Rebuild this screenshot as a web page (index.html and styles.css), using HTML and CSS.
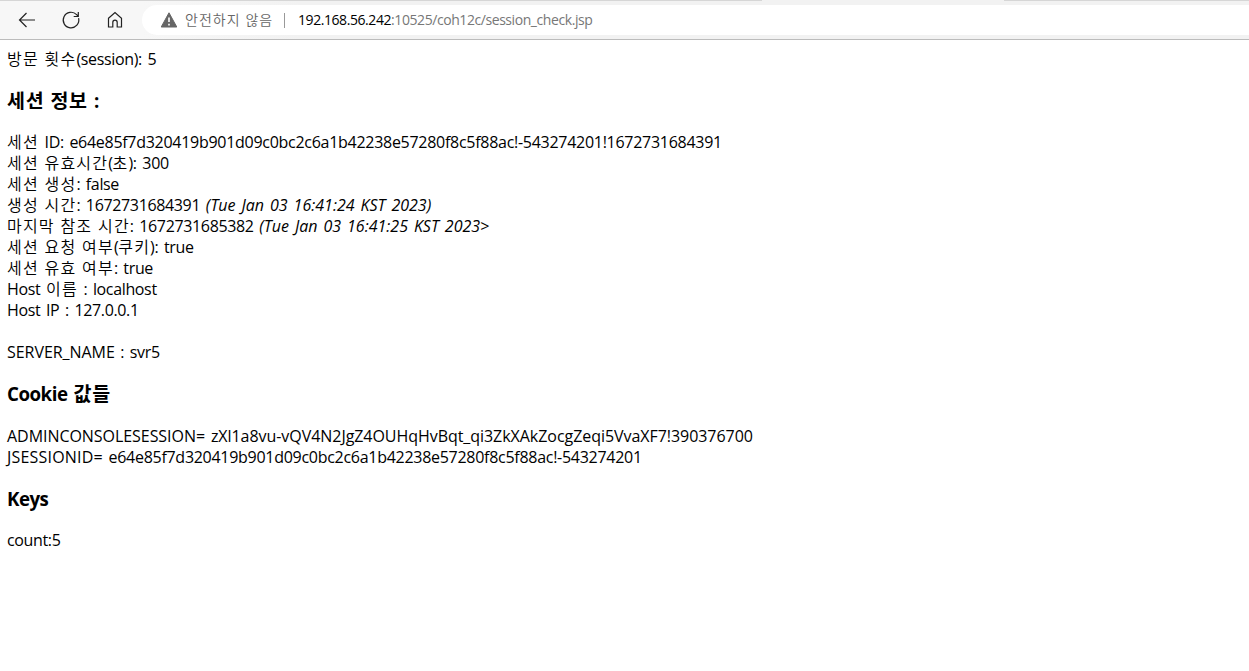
FILE: index.html
```html
<!DOCTYPE html>
<html lang="ko">

<head>
    <meta charset="UTF-8">
    <meta name="viewport" content="width=device-width, initial-scale=1.0">
    <title>session_check.jsp</title>
    <link rel="stylesheet" href="styles.css">
</head>

<body>
    <!-- 주소 표시줄 -->
    <div class="toolbar">
        <div class="tab-edge">
            <span class="edge-left"></span>
            <span class="edge-right"></span>
        </div>
        <div class="nav">
            <svg class="icon" width="20" height="20" viewBox="0 0 20 20">
                <path d="M18 10H2.5M9.5 3L2.5 10l7 7" />
            </svg>
            <svg class="icon" width="20" height="20" viewBox="0 0 20 20">
                <path d="M17.6 8.2A7.8 7.8 0 1 1 15.6 4.6L17.3 6.3M17.3 2v4.5h-4.6" />
            </svg>
            <svg class="icon" width="20" height="20" viewBox="0 0 20 20">
                <path d="M3.5 8.3L10 2.5l6.5 5.8V17h-4.3v-4.6a2.2 2.2 0 0 0-4.4 0V17H3.5z" />
            </svg>
        </div>
        <div class="address">
            <svg class="warn" width="16" height="16" viewBox="0 0 16 16">
                <path d="M8 .8L15.8 15H.2z" fill="#666" stroke="#666" stroke-linejoin="round" />
                <path d="M8 5.5v4.6M8 11.8v1.7" stroke="#fff" stroke-width="1.6" />
            </svg>
            <span class="secure">안전하지 않음</span>
            <span class="divider"></span>
            <span class="url"><b>192.168.56.242</b>:10525/coh12c/session_check.jsp</span>
        </div>
    </div>

    <!-- 세션 내용 -->
    <div class="page">
        <div><span class="ko">방문 횟수</span>(session): 5</div>
        <h3><span class="ko">세션 정보</span> :</h3>
        <div><span class="ko">세션 </span>ID: <span class="hash">e64e85f7d320419b901d09c0bc2c6a1b42238e57280f8c5f88ac!-543274201!1672731684391</span></div>
        <div><span class="ko">세션 유효시간</span>(<span class="ko">초</span>): 300</div>
        <div><span class="ko">세션 생성</span>: false</div>
        <div><span class="ko">생성 시간</span>: 1672731684391 <i>(Tue Jan 03 16:41:24 KST 2023)</i></div>
        <div><span class="ko">마지막 참조 시간</span>: 1672731685382 <i>(Tue Jan 03 16:41:25 KST 2023&gt;</i></div>
        <div><span class="ko">세션 요청 여부</span>(<span class="ko">쿠키</span>): true</div>
        <div><span class="ko">세션 유효 여부</span>: true</div>
        <div>Host <span class="ko">이름</span> : localhost</div>
        <div>Host IP : 127.0.0.1</div>
        <br>
        <div><span class="key">SERVER_NAME</span> : svr5</div>
        <h3>Cookie <span class="ko">값들</span></h3>
        <div class="key">ADMINCONSOLESESSION= zXl1a8vu-vQV4N2JgZ4OUHqHvBqt_qi3ZkXAkZocgZeqi5VvaXF7!390376700</div>
        <div><span class="key jsession">JSESSIONID=</span> <span class="hash">e64e85f7d320419b901d09c0bc2c6a1b42238e57280f8c5f88ac!-543274201</span></div>
        <h3>Keys</h3>
        <div>count:5</div>
    </div>
</body>

</html>
```
FILE: styles.css
```css
body {
    margin: 0;
    background: #fff;
    color: #000;
    font-family: "Open Sans", "Noto Sans CJK KR", sans-serif;
    font-size: 16px;
    line-height: 21px;
    overflow: hidden;
}

.toolbar {
    box-sizing: border-box;
    height: 40px;
    background: linear-gradient(90deg, #f7f7f7 140px, #f2f2f2 300px);
    border-bottom: 1px solid #bcbcbc;
    display: grid;
    grid-template-columns: 142px 1fr;
    grid-template-rows: 1px 4px 30px;
}

.tab-edge {
    grid-column: 1 / 3;
    display: flex;
    justify-content: space-between;
}

.edge-left {
    width: 762px;
    background: #d6d6d6;
}

.edge-right {
    width: 245px;
    background: #d6d6d6;
}

.nav {
    grid-row: 3;
    display: flex;
    align-items: center;
    gap: 24px;
    padding-left: 17px;
}

.icon {
    fill: none;
    stroke: #222;
    stroke-width: 1.2;
}

.address {
    grid-row: 3;
    display: flex;
    align-items: center;
    background: #fff;
    border-radius: 15px 0 0 15px;
    padding-left: 19px;
    font-size: 14px;
    color: #777;
}

.secure {
    margin: -2px 0 0 8px;
    width: 91px;
    white-space: nowrap;
    font-family: "Noto Sans CJK KR", sans-serif;
    font-weight: 350;
    color: #666;
    letter-spacing: 1px;
}

.divider {
    width: 1px;
    height: 15px;
    margin: 0 13px 0 8px;
    background: #999;
}

.url {
    margin-top: -1px;
    letter-spacing: -0.43px;
}

.url b {
    font-weight: normal;
    color: #000;
}

.page {
    padding: 9px 7px;
    letter-spacing: -0.35px;
    word-spacing: 1.8px;
    white-space: nowrap;
}

.page div {
    height: 21px;
}

.ko {
    font-family: "Noto Sans CJK KR", sans-serif;
    font-weight: 350;
    line-height: 1;
    letter-spacing: 1.2px;
    word-spacing: 0;
}

.hash {
    letter-spacing: -0.28px;
}

.key {
    letter-spacing: -0.05px;
}

.jsession {
    letter-spacing: 0.2px;
}

i {
    letter-spacing: 0;
}

h3 {
    height: 25px;
    margin: 18.72px 0;
    font-size: 18.72px;
    line-height: 23px;
    letter-spacing: -0.5px;
}

h3 .ko {
    font-size: 19.5px;
    font-weight: bold;
    letter-spacing: 0.7px;
}
```
